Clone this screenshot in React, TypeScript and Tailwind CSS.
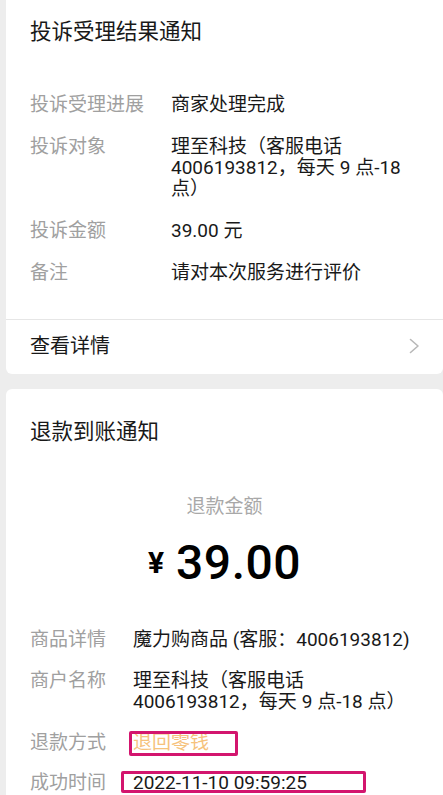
const font = {
  fontFamily: 'Roboto, "Noto Sans CJK SC", sans-serif',
};

type Row = { label: string; value: React.ReactNode };

// iOS puts a narrow gap between CJK and Latin runs
const sp = "\u2005";

function InfoRows({ rows, labelWidth, gap }: { rows: Row[]; labelWidth: string; gap: string }) {
  return (
    <div className={`flex flex-col ${gap}`}>
      {rows.map((row) => (
        <div key={row.label} className="flex text-[19px] leading-[21px]">
          <div className={`${labelWidth} shrink-0 text-[#a0a0a0]`}>{row.label}</div>
          <div className="min-w-0 flex-1 whitespace-nowrap text-[#191919]">{row.value}</div>
        </div>
      ))}
    </div>
  );
}

function ComplaintCard() {
  const rows: Row[] = [
    { label: "投诉受理进展", value: "商家处理完成" },
    {
      label: "投诉对象",
      value: (
        <>
          理至科技（客服电话
          <br />
          {`4006193812，每天${sp}9${sp}点-18`}
          <br />
          点）
        </>
      ),
    },
    { label: "投诉金额", value: `39.00${sp}元` },
    { label: "备注", value: "请对本次服务进行评价" },
  ];

  return (
    <section className="rounded-b-[6px] bg-white">
      <div className="px-[24px] pt-[18px] pb-[36px]">
        <h2 className="text-[21.5px] leading-[28px] text-[#191919]">投诉受理结果通知</h2>
        <div className="mt-[48px]">
          <InfoRows rows={rows} labelWidth="w-[141px]" gap="gap-[21px]" />
        </div>
      </div>
      <div className="flex h-[55px] items-center justify-between border-t border-[#e6e6e6] pl-[24px] pr-[23px] pb-[2px]">
        <span className="text-[20px] leading-[26px] text-[#191919]">查看详情</span>
        <svg width="11" height="16" viewBox="0 0 11 16" fill="none">
          <path d="M1.5 1.5 L9 8 L1.5 14.5" stroke="#b8b8b8" strokeWidth="1.6" strokeLinecap="round" strokeLinejoin="round" />
        </svg>
      </div>
    </section>
  );
}

function RefundCard() {
  const rows: Row[] = [
    { label: "商品详情", value: "魔力购商品 (客服：4006193812)" },
    {
      label: "商户名称",
      value: (
        <>
          理至科技（客服电话
          <br />
          {`4006193812，每天${sp}9${sp}点-18${sp}点）`}
        </>
      ),
    },
    {
      label: "退款方式",
      value: (
        <span className="relative inline-block text-[#f6c27c]">
          退回零钱
          <span className="absolute -top-[1px] -left-[4px] h-[25px] w-[109px] rounded-[2px] border-[3px] border-[#d3156e]" />
        </span>
      ),
    },
    {
      label: "成功时间",
      value: (
        <span className="relative inline-block">
          2022-11-10 09:59:25
          <span className="absolute -top-[1px] -left-[12px] h-[22px] w-[245px] rounded-[2px] border-[3px] border-[#d3156e]" />
        </span>
      ),
    },
  ];

  return (
    <section className="mt-[15px] rounded-t-[6px] bg-white px-[24px] pt-[29px] pb-[40px]">
      <h2 className="text-[21.5px] leading-[28px] text-[#191919]">退款到账通知</h2>
      <div className="mt-[49px] flex flex-col items-center">
        <div className="text-[19px] leading-[24px] text-[#a8a8a8]">退款金额</div>
        <div className="mt-[15px] flex items-center leading-[58px] text-black">
          <span className="mr-[12px] text-[30px] font-bold">¥</span>
          <span className="text-[48px] font-medium tracking-[0.5px]">39.00</span>
        </div>
      </div>
      <div className="mt-[37px] flex flex-col gap-[20px]">
        <InfoRows rows={rows.slice(0, 2)} labelWidth="w-[103px]" gap="gap-[20px]" />
        <InfoRows rows={rows.slice(2)} labelWidth="w-[103px]" gap="gap-[19px]" />
      </div>
    </section>
  );
}

export default function App() {
  return (
    <div className="min-h-screen bg-[#ededed] pl-[6px]" style={font}>
      <ComplaintCard />
      <RefundCard />
    </div>
  );
}
